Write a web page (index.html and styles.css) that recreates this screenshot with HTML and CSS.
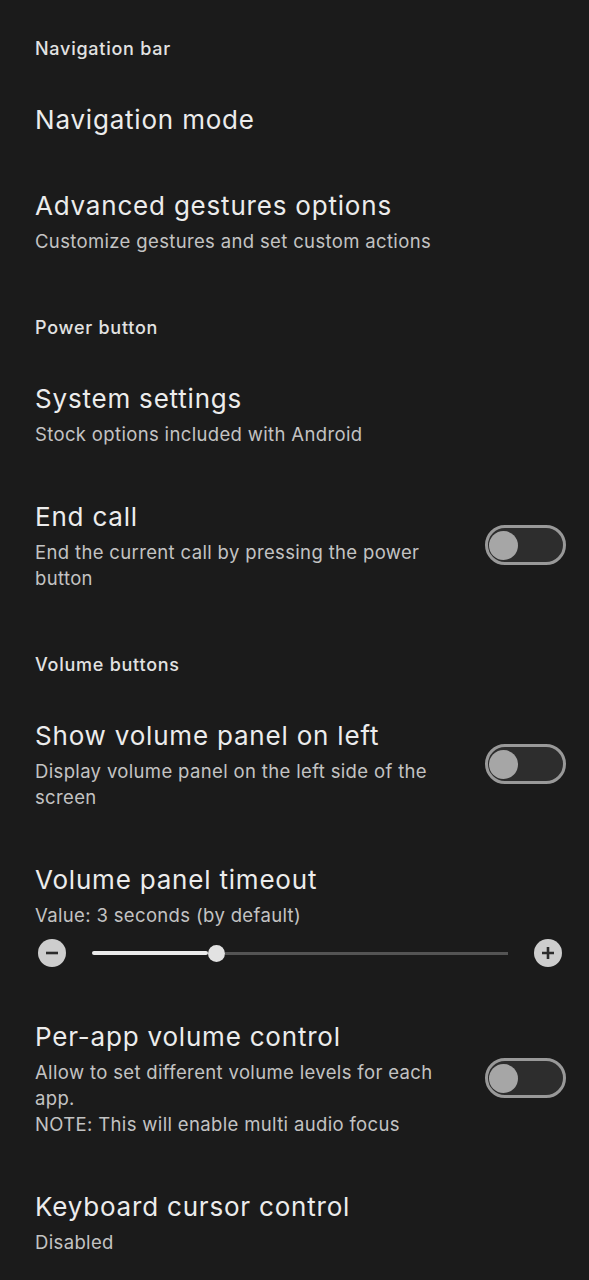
FILE: index.html
```html
<!DOCTYPE html>
<html>
<head>
<meta charset="utf-8">
<link rel="stylesheet" href="styles.css">
</head>
<body>
<div class="page">
  <div class="header first">Navigation bar</div>
  <div class="item"><div class="text"><div class="title">Navigation mode</div></div></div>
  <div class="item"><div class="text"><div class="title">Advanced gestures options</div><div class="sub">Customize gestures and set custom actions</div></div></div>

  <div class="header">Power button</div>
  <div class="item"><div class="text"><div class="title">System settings</div><div class="sub">Stock options included with Android</div></div></div>
  <div class="item"><div class="text"><div class="title">End call</div><div class="sub">End the current call by pressing the power button</div></div><div class="switch"><div class="knob"></div></div></div>

  <div class="header">Volume buttons</div>
  <div class="item"><div class="text"><div class="title">Show volume panel on left</div><div class="sub">Display volume panel on the left side of the screen</div></div><div class="switch"><div class="knob"></div></div></div>
  <div class="item slider-item">
    <div class="text"><div class="title">Volume panel timeout</div><div class="sub">Value: 3 seconds (by default)</div>
      <div class="slider">
        <div class="step"><svg width="28" height="28" viewBox="0 0 28 28"><circle cx="14" cy="14" r="14" fill="#cdcdcd"/><path d="M8 14h12" stroke="#2b2b2b" stroke-width="2.6"/></svg></div>
        <div class="track">
          <div class="active" style="width:28%"></div>
          <div class="thumb"></div>
          <div class="inactive"></div>
        </div>
        <div class="step"><svg width="28" height="28" viewBox="0 0 28 28"><circle cx="14" cy="14" r="14" fill="#cdcdcd"/><path d="M8 14h12M14 8v12" stroke="#2b2b2b" stroke-width="2.6"/></svg></div>
      </div>
    </div>
  </div>
  <div class="item"><div class="text"><div class="title">Per-app volume control</div><div class="sub">Allow to set different volume levels for each app.<br>NOTE: This will enable multi audio focus</div></div><div class="switch"><div class="knob"></div></div></div>
  <div class="item"><div class="text"><div class="title">Keyboard cursor control</div><div class="sub">Disabled</div></div></div>
</div>
</body>
</html>
```
FILE: styles.css
```css
html, body {
  margin: 0;
  padding: 0;
  background: #1b1b1b;
}
body {
  font-family: Inter, "Open Sans", sans-serif;
  width: 589px;
  height: 1280px;
  overflow: hidden;
}
.page {
  padding: 0 23px 0 35px;
}
.header {
  font-size: 18px;
  line-height: 24px;
  font-weight: 500;
  letter-spacing: 0.75px;
  color: #e2e2e2;
  margin-top: 35px;
  padding-bottom: 16px;
}
.header.first {
  margin-top: 37px;
}
.item {
  display: flex;
  align-items: center;
  padding: 27px 0;
}
.slider-item {
  padding-bottom: 25px;
}
.text {
  flex: 1;
  min-width: 0;
}
.title {
  font-size: 26px;
  line-height: 32px;
  letter-spacing: 0.8px;
  color: #ececec;
}
.sub {
  margin-top: 6px;
  font-size: 18.5px;
  line-height: 26px;
  letter-spacing: 0.35px;
  color: #c3c3c3;
  max-width: 410px;
}
.switch {
  flex: none;
  width: 74px;
  height: 34px;
  border: 3px solid #999999;
  border-radius: 20px;
  background: #2d2d2d;
  display: flex;
  align-items: center;
  padding-left: 1px;
  margin-left: 40px;
  margin-top: -2px;
}
.knob {
  width: 29px;
  height: 29px;
  border-radius: 50%;
  background: #a6a6a6;
}
.slider {
  display: flex;
  align-items: center;
  height: 32px;
  margin: 9px 4px 0 3px;
}
.step {
  flex: none;
  width: 28px;
  height: 28px;
}
.step svg {
  display: block;
}
.track {
  flex: 1;
  display: flex;
  align-items: center;
  margin: 0 26px;
}
.active {
  height: 4px;
  background: #ebebeb;
  border-radius: 2px;
}
.thumb {
  flex: none;
  width: 17px;
  height: 17px;
  border-radius: 50%;
  background: #e2e2e2;
}
.inactive {
  flex: 1;
  height: 3px;
  background: #545454;
}
```
